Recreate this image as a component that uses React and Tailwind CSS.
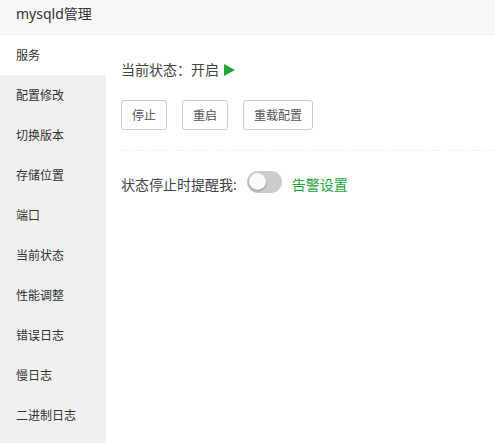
import { useState } from "react";

const tabs = [
  "服务",
  "配置修改",
  "切换版本",
  "存储位置",
  "端口",
  "当前状态",
  "性能调整",
  "错误日志",
  "慢日志",
  "二进制日志",
];

function ActionButton({ children }) {
  return (
    <button
      type="button"
      className="h-[30px] rounded-[3px] border border-[#cccccc] bg-white px-2.5 pt-0.5 text-xs text-[#555555] hover:bg-[#f0f0f0]"
    >
      {children}
    </button>
  );
}

function Sidebar({ active, onSelect }) {
  return (
    <nav className="w-[106px] shrink-0 bg-[#f0f0f0]">
      <ul>
        {tabs.map((tab) => (
          <li key={tab}>
            <button
              type="button"
              onClick={() => onSelect(tab)}
              className={
                "block h-10 w-full px-4 pt-0.5 text-left text-xs text-[#333333] " +
                (tab === active ? "bg-white" : "")
              }
            >
              {tab}
            </button>
          </li>
        ))}
      </ul>
    </nav>
  );
}

export default function App() {
  const [active, setActive] = useState("服务");
  const [alarm, setAlarm] = useState(false);

  return (
    <div className="flex min-h-screen flex-col bg-white font-['Noto_Sans','Noto_Sans_CJK_SC',sans-serif] text-[#333333]">
      <header className="border-b border-[#eeeeee] bg-[#f8f8f8] px-4 pb-1.5">
        <h1 className="text-sm leading-7">mysqld管理</h1>
      </header>
      <div className="flex flex-1">
        <Sidebar active={active} onSelect={setActive} />
        <main className="min-w-0 flex-1 pt-5 pl-[15px] text-sm text-[#444444]">
          <section className="border-b border-dashed border-[#eeeeee] pb-5">
            <p className="flex h-[30px] items-center">
              <span>当前状态：开启</span>
              <svg
                className="ml-[5px] h-3 w-[11px] fill-[#20a53a]"
                viewBox="0 0 11 12"
                aria-hidden="true"
              >
                <path d="M0 0 11 6 0 12Z" />
              </svg>
            </p>
            <div className="mt-[15px] flex gap-[15px]">
              <ActionButton>停止</ActionButton>
              <ActionButton>重启</ActionButton>
              <ActionButton>重载配置</ActionButton>
            </div>
          </section>
          <section className="flex items-center pt-5">
            <label htmlFor="alarm" className="leading-7">
              状态停止时提醒我:
            </label>
            <input
              id="alarm"
              type="checkbox"
              role="switch"
              checked={alarm}
              onChange={(event) => setAlarm(event.target.checked)}
              className="mb-1.5 ml-2.5 h-[22px] w-[35px] cursor-pointer appearance-none rounded-full bg-[#cccccc] p-0.5 before:block before:size-[17px] before:rounded-full before:bg-[#fafafa] before:shadow-[0_1px_2px_#888888] checked:bg-[#20a53a] checked:before:ml-auto"
            />
            <a href="#alarm" className="ml-2.5 text-[#20a53a]">
              告警设置
            </a>
          </section>
        </main>
      </div>
    </div>
  );
}
